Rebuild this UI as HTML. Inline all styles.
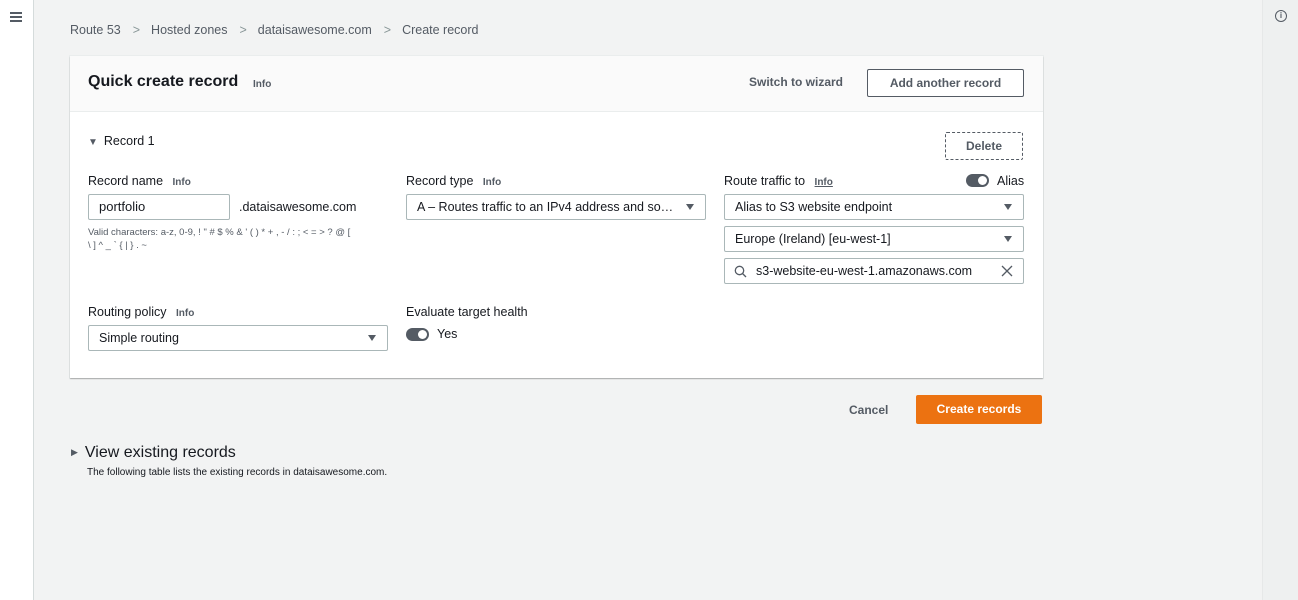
<!DOCTYPE html>
<html><head><style>
*{box-sizing:border-box;margin:0;padding:0}
body{width:1298px;height:600px;background:#f2f3f3;font-family:"Liberation Sans",sans-serif;font-size:13px;color:#16191f;position:relative;overflow:hidden}
.a{position:absolute;white-space:nowrap}
.info{font-size:10px;font-weight:bold;color:#545b64}
.inp{position:absolute;background:#fff;border:1px solid #aab7b8;border-radius:2px;height:26px;padding:0 10px;line-height:24px;font-size:13px;white-space:nowrap;overflow:hidden}
.tri{position:absolute;right:11px;top:9px;width:0;height:0;border-left:4px solid transparent;border-right:4px solid transparent;border-top:6px solid #545b64}
.btn{position:absolute;border:1px solid #545b64;border-radius:2px;background:#fff;font-weight:bold;color:#545b64;text-align:center;font-size:12px}
.tog{position:absolute;width:23px;height:13px;border-radius:7px;background:#545b64}
.tog::after{content:"";position:absolute;right:2px;top:2px;width:9px;height:9px;border-radius:50%;background:#fff}
</style></head><body>
<div class="a" style="left:0;top:0;width:34px;height:600px;background:#fff;border-right:1px solid #d5dbdb"></div>
<div class="a" style="left:10px;top:12px;width:12px;height:2px;background:#545b64;box-shadow:0 4px 0 #545b64,0 8px 0 #545b64"></div>
<div class="a" style="left:1262px;top:0;width:36px;height:600px;background:#eef0f0;border-left:1px solid #e6e8e8"></div>
<div class="a" style="left:1275px;top:10px;width:12px;height:12px;border:1.5px solid #545b64;border-radius:50%;font-size:8px;font-weight:bold;text-align:center;line-height:9px;color:#545b64">i</div>

<div class="a" style="left:70px;top:23px;color:#545b64;font-size:12.5px">Route 53<span style="margin:0 11px 0 12px;color:#879596">&gt;</span>Hosted zones<span style="margin:0 11px 0 12px;color:#879596">&gt;</span>dataisawesome.com<span style="margin:0 11px 0 12px;color:#879596">&gt;</span>Create record</div>

<div class="a" style="left:70px;top:56px;width:973px;height:322px;background:#fff;box-shadow:0 1px 1px rgba(0,0,0,.3),0 0 0 1px #eaeded"></div>
<div class="a" style="left:70px;top:56px;width:973px;height:56px;background:#fafafa;border-bottom:1px solid #eaeded"></div>
<div class="a" style="left:88px;top:73px;font-size:16px;font-weight:bold">Quick create record</div>
<div class="a info" style="left:253px;top:79px">Info</div>
<div class="a" style="left:749px;top:75px;font-weight:bold;color:#545b64;font-size:12px">Switch to wizard</div>
<div class="btn" style="left:867px;top:69px;width:157px;height:28px;line-height:26px">Add another record</div>

<div class="a" style="left:88px;top:134px;font-size:12.5px"><span style="font-size:10px;color:#545b64;margin-right:6px">▼</span>Record 1</div>
<div class="btn" style="left:945px;top:132px;width:78px;height:28px;line-height:26px;border-style:dashed">Delete</div>

<div class="a" style="left:88px;top:174px;font-size:12.5px">Record name <span class="info" style="margin-left:6px">Info</span></div>
<div class="inp" style="left:88px;top:194px;width:142px">portfolio</div>
<div class="a" style="left:239px;top:200px;font-size:12.5px">.dataisawesome.com</div>
<div class="a" style="left:88px;top:226px;font-size:9.5px;color:#545b64;line-height:13px">Valid characters: a-z, 0-9, ! " # $ % &amp; ' ( ) * + , - / : ; &lt; = &gt; ? @ [<br>\ ] ^ _ ` { | } . ~</div>

<div class="a" style="left:406px;top:174px;font-size:12.5px">Record type <span class="info" style="margin-left:6px">Info</span></div>
<div class="inp" style="left:406px;top:194px;width:300px;padding-right:30px;font-size:12.5px">A – Routes traffic to an IPv4 address and so…<div class="tri"></div></div>

<div class="a" style="left:724px;top:174px;font-size:12.5px">Route traffic to <span class="info" style="margin-left:6px;text-decoration:underline">Info</span></div>
<div class="tog" style="left:966px;top:174px"></div>
<div class="a" style="left:997px;top:174px;font-size:12.5px">Alias</div>
<div class="inp" style="left:724px;top:194px;width:300px;font-size:12.5px">Alias to S3 website endpoint<div class="tri"></div></div>
<div class="inp" style="left:724px;top:226px;width:300px;font-size:12.5px">Europe (Ireland) [eu-west-1]<div class="tri"></div></div>
<div class="inp" style="left:724px;top:258px;width:300px;padding-left:31px;font-size:12.5px">s3-website-eu-west-1.amazonaws.com
<svg style="position:absolute;left:9px;top:6px" width="13" height="13" viewBox="0 0 13 13"><circle cx="5.5" cy="5.5" r="4.2" fill="none" stroke="#545b64" stroke-width="1.3"/><path d="M8.5 8.5L12 12" stroke="#545b64" stroke-width="1.3"/></svg>
<svg style="position:absolute;right:10px;top:6px" width="12" height="12" viewBox="0 0 12 12"><path d="M1 1L11 11M11 1L1 11" stroke="#545b64" stroke-width="1.3"/></svg></div>

<div class="a" style="left:88px;top:305px;font-size:12.5px">Routing policy <span class="info" style="margin-left:6px">Info</span></div>
<div class="inp" style="left:88px;top:325px;width:300px;font-size:12.5px">Simple routing<div class="tri"></div></div>

<div class="a" style="left:406px;top:305px;font-size:12.5px">Evaluate target health</div>
<div class="tog" style="left:406px;top:328px"></div>
<div class="a" style="left:437px;top:327px;font-size:12.5px">Yes</div>

<div class="a" style="left:849px;top:403px;font-weight:bold;color:#545b64;font-size:12px">Cancel</div>
<div class="a" style="left:916px;top:395px;width:126px;height:29px;background:#ec7211;border-radius:2px;color:#fff;font-weight:bold;text-align:center;line-height:29px;font-size:12px">Create records</div>

<div class="a" style="left:71px;top:444px;font-size:16px"><span style="font-size:9px;color:#545b64;margin-right:7px;vertical-align:2px">▶</span>View existing records</div>
<div class="a" style="left:87px;top:467px;font-size:10px">The following table lists the existing records in dataisawesome.com.</div>
</body></html>
